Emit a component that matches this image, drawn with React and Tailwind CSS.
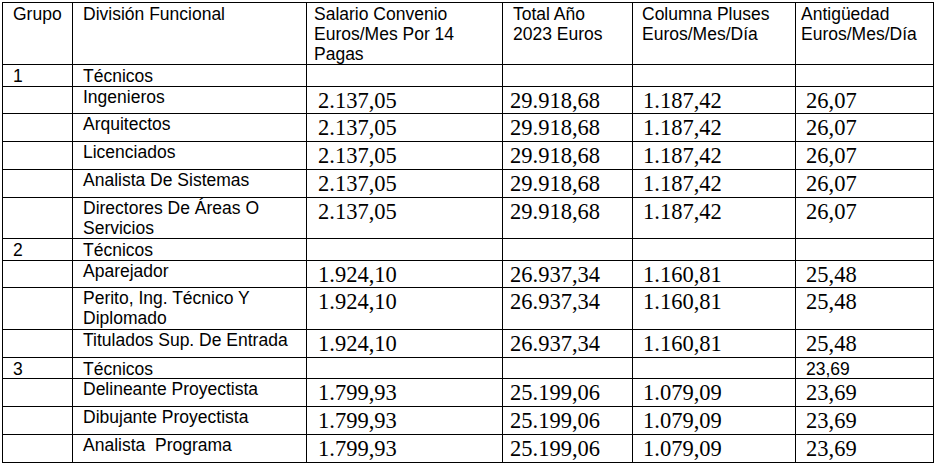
import React from 'react';

const sans = "font-['Liberation_Sans',Arial,sans-serif] text-[17.5px] leading-[20px]";
const serif = "font-['Liberation_Serif','Times_New_Roman',serif] text-[22.5px] leading-[22.5px]";

const widths = ['w-[70px]', 'w-[234px]', 'w-[196px]', 'w-[130px]', 'w-[163px]', 'w-[138px]'];
const headPad = ['pl-[10px]', 'pl-[10px]', 'pl-[7px]', 'pl-[10px]', 'pl-[9px]', 'pl-[5px]'];
const numPad = ['', '', 'pl-[11px]', 'pl-[7px]', 'pl-[10px]', 'pl-[10px]'];

const headers = [
  ['Grupo'],
  ['División Funcional'],
  ['Salario Convenio', 'Euros/Mes Por 14', 'Pagas'],
  ['Total Año', '2023 Euros'],
  ['Columna Pluses', 'Euros/Mes/Día'],
  ['Antigüedad', 'Euros/Mes/Día'],
];

const g1 = ['2.137,05', '29.918,68', '1.187,42', '26,07'];
const g2 = ['1.924,10', '26.937,34', '1.160,81', '25,48'];
const g3 = ['1.799,93', '25.199,06', '1.079,09', '23,69'];

// h = row height in px (bottom border included)
const rows = [
  { g: '1', d: ['Técnicos'], h: 'h-[22px]' },
  { d: ['Ingenieros'], v: g1, h: 'h-[27px]' },
  { d: ['Arquitectos'], v: g1, h: 'h-[28px]' },
  { d: ['Licenciados'], v: g1, h: 'h-[28px]' },
  { d: ['Analista De Sistemas'], v: g1, h: 'h-[28px]' },
  { d: ['Directores De Áreas O', 'Servicios'], v: g1, h: 'h-[41px]' },
  { g: '2', d: ['Técnicos'], h: 'h-[22px]' },
  { d: ['Aparejador'], v: g2, h: 'h-[27px]' },
  { d: ['Perito, Ing. Técnico Y', 'Diplomado'], v: g2, h: 'h-[42px]' },
  { d: ['Titulados Sup. De Entrada'], v: g2, h: 'h-[28px]' },
  { g: '3', d: ['Técnicos'], h: 'h-[21px]', last: '23,69' },
  { d: ['Delineante Proyectista'], v: g3, h: 'h-[28px]' },
  { d: ['Dibujante Proyectista'], v: g3, h: 'h-[28px]' },
  { d: ['Analista  Programa'], v: g3, h: 'h-[28px]' },
];

function Lines({ lines }) {
  return lines.map((l, i) => (
    <div key={i} className="whitespace-pre">{l}</div>
  ));
}

export default function App() {
  return (
    <div className="w-[937px] h-[464px] bg-white text-black pl-[2px] pt-[2px] overflow-hidden">
      <div className="w-max border-l border-t border-black">
        <div className="flex h-[62px]">
          {headers.map((h, i) => (
            <div key={i} className={`${widths[i]} ${headPad[i]} ${sans} pt-[1px] border-r border-b border-black`}>
              <Lines lines={h} />
            </div>
          ))}
        </div>
        {rows.map((r, ri) => (
          <div key={ri} className={`flex ${r.h}`}>
            <div className={`${widths[0]} ${headPad[0]} ${sans} pt-[1px] border-r border-b border-black`}>
              {r.g || ''}
            </div>
            <div className={`${widths[1]} ${headPad[1]} ${sans} ${r.v ? 'pt-0' : 'pt-[1px]'} border-r border-b border-black`}>
              <Lines lines={r.d} />
            </div>
            {[0, 1, 2, 3].map((k) => (
              <div key={k} className={`${widths[k + 2]} border-r border-b border-black ${r.v ? `${serif} ${numPad[k + 2]} pt-[3px]` : `${sans} pl-[10px] pt-[1px]`}`}>
                {r.v ? r.v[k] : k === 3 && r.last ? r.last : ''}
              </div>
            ))}
          </div>
        ))}
      </div>
    </div>
  );
}
